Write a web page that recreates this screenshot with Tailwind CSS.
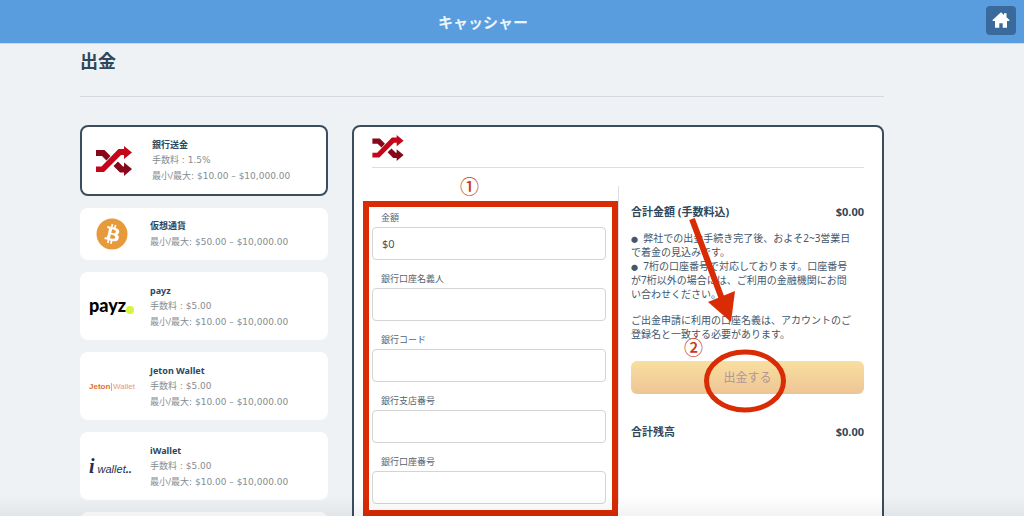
<!DOCTYPE html>
<html lang="ja">
<head>
<meta charset="utf-8">
<meta name="viewport" content="width=device-width, initial-scale=1">
<title>キャッシャー</title>
<script src="https://cdn.jsdelivr.net/npm/@tailwindcss/browser@4"></script>
</head>
<body class="h-screen overflow-hidden bg-[#eef2f5] font-['Noto_Sans','Noto_Sans_CJK_JP',sans-serif] text-[#2f4759]">
<svg class="hidden" aria-hidden="true">
  <symbol id="shuffle" viewBox="0 0 36 30">
    <path fill="#86081a" d="M0 4h8.500l6 6-4 4.500L6 10H0zM22 15.500l5 5h1v-4l8 6.500-8 7v-3.500h-4L17.500 20z"/>
    <path fill="#c4061a" d="M0 20.500h5.500L22.500 3H28V0l8 6.500-8 6.500V9h-3L8 26H0z"/>
  </symbol>
</svg>

<header class="flex h-[44px] items-center border-b border-[#c3dcf3] bg-[#5a9ddf]">
  <p class="flex-1 pr-15 text-center text-[15px] font-bold leading-5 text-[#eaf6fe]">キャッシャー</p>
  <a href="#" aria-label="ホーム" class="-ml-10 mb-[3px] mr-2 flex h-[29px] w-[30px] items-center justify-center rounded bg-[#3a6a9b]">
    <svg class="h-4 w-[18px]" viewBox="0 0 18 16" fill="#fff"><path d="M9 0.3 12 3V1.2h2.5v4L17.7 8.200 16.900 9H15v6.700h-4.300v-4.500H7.300v4.500H3V9H1.100L.3 8.200z"/></svg>
  </a>
</header>

<main class="pl-20 pr-[140px]">
  <h1 class="border-b border-[#d3d9de] pb-[21px] pt-[4px] text-[18px] font-bold leading-[27px]">出金</h1>

  <div class="mt-7 grid grid-cols-[248px_1fr] items-start gap-6">
    <ul class="flex flex-col gap-3 font-['DejaVu_Sans','Noto_Sans_CJK_JP',sans-serif] text-[9px] leading-4 text-[#858d93]">
      <li><a href="#" class="flex items-center gap-[15px] rounded-lg border-2 border-[#3b4e5f] bg-white py-[10px] pl-[9px]">
        <span class="flex w-[46px] justify-center"><svg class="h-[30px] w-9"><use href="#shuffle"/></svg></span>
        <span class="flex flex-col"><b class="font-['Noto_Sans','Noto_Sans_CJK_JP',sans-serif] leading-[15px] text-[#2c485e]">銀行送金</b><span>手数料 : 1.5%</span><span>最小/最大: $10.00 – $10,000.00</span></span>
      </a></li>
      <li><a href="#" class="flex items-center gap-[15px] rounded-lg bg-white py-[10px] pl-[9px]">
        <span class="flex w-[46px] justify-center">
          <svg class="h-8 w-8" viewBox="0 0 32 32"><circle cx="16" cy="16" r="15.500" fill="#e79a3c"/><path fill="#fff" d="M23.189 14.020c.314-2.096-1.283-3.223-3.465-3.975l.708-2.840-1.728-.430-.690 2.765-1.385-.326.695-2.783L15.596 6l-.708 2.839-1.104-.260.002-.009-2.384-.595-.460 1.846s1.283.294 1.256.312c.700.175.826.638.805 1.006l-.806 3.235.180.058-.183-.045-1.130 4.532c-.086.212-.303.531-.793.410.018.025-1.256-.313-1.256-.313l-.858 1.978 2.250.561 1.232.318-.715 2.872 1.727.430.708-2.840 1.380.357-.706 2.828 1.728.430.715-2.866c2.948.558 5.164.333 6.097-2.333.752-2.146-.037-3.385-1.588-4.192 1.130-.260 1.980-1.003 2.207-2.538zm-3.950 5.538c-.533 2.147-4.148.986-5.320.695l.950-3.805c1.172.293 4.929.872 4.370 3.110zm.535-5.569c-.487 1.953-3.495.960-4.470.717l.860-3.450c.975.243 4.118.696 3.610 2.733z"/></svg>
        </span>
        <span class="flex flex-col"><b class="font-['Noto_Sans','Noto_Sans_CJK_JP',sans-serif] text-[#2c485e]">仮想通貨</b><span>最小/最大: $50.00 – $10,000.00</span></span>
      </a></li>
      <li><a href="#" class="flex items-center gap-[15px] rounded-lg bg-white pb-[10px] pl-[9px] pt-[11px]">
        <span class="flex w-[46px] items-end pb-1"><span class="font-['Lato'] text-[18px] font-black leading-5 text-black">payz</span><i class="mb-px h-2 w-2 shrink-0 rounded-full bg-[#d3f53c]"></i></span>
        <span class="flex flex-col"><b class="font-['Noto_Sans','Noto_Sans_CJK_JP',sans-serif] leading-[15px] text-[#2c485e]">payz</b><span>手数料 : $5.00</span><span>最小/最大: $10.00 – $10,000.00</span></span>
      </a></li>
      <li><a href="#" class="flex items-center gap-[15px] rounded-lg bg-white pb-[10px] pl-[9px] pt-[11px]">
        <span class="flex w-[46px] items-center font-['Liberation_Sans'] text-[8px] leading-[10px] text-[#dd7031]"><b>Jeton</b><i class="mx-px h-2 w-px bg-[#dfa888]"></i><span class="text-[#e29a74]">Wallet</span></span>
        <span class="flex flex-col"><b class="font-['Noto_Sans','Noto_Sans_CJK_JP',sans-serif] leading-[15px] text-[#2c485e]">Jeton Wallet</b><span>手数料 : $5.00</span><span>最小/最大: $10.00 – $10,000.00</span></span>
      </a></li>
      <li><a href="#" class="flex items-center gap-[15px] rounded-lg bg-white pb-[10px] pl-[9px] pt-[11px]">
        <span class="flex w-[46px] items-baseline gap-[3px] italic text-[#233052]"><b class="font-['Liberation_Serif'] text-[20px] leading-5">i</b><span class="font-['Liberation_Sans'] text-[11px] leading-4">wallet<b>..</b></span></span>
        <span class="flex flex-col"><b class="font-['Noto_Sans','Noto_Sans_CJK_JP',sans-serif] leading-[15px] text-[#2c485e]">iWallet</b><span>手数料 : $5.00</span><span>最小/最大: $10.00 – $10,000.00</span></span>
      </a></li>
      <li><a href="#" aria-label="その他" class="block h-[68px] rounded-lg bg-white"></a></li>
    </ul>

    <section class="rounded-lg border-2 border-[#3b4e5f] bg-white px-[18px] pb-12 pt-[8px]">
      <div class="border-b border-[#dcdfe1] pb-[6px]"><svg class="h-[26px] w-8"><use href="#shuffle"/></svg></div>
      <form class="relative mt-[18px] grid grid-cols-2">
        <div class="flex flex-col pr-3 pt-[13px] text-[9px] text-[#526475]">
          <label for="amount" class="pb-[2px] pl-[9px] pt-[12px] leading-[14px]">金額</label>
          <input id="amount" value="$0" class="h-[33px] rounded border border-[#d2d4d6] px-[9px] text-[11px] text-[#43566a]">
          <label for="holder" class="pb-[2px] pl-[9px] pt-[12px] leading-[14px]">銀行口座名義人</label>
          <input id="holder" class="h-[33px] rounded border border-[#d2d4d6] px-[9px] text-[11px]">
          <label for="bank" class="pb-[2px] pl-[9px] pt-[12px] leading-[14px]">銀行コード</label>
          <input id="bank" class="h-[33px] rounded border border-[#d2d4d6] px-[9px] text-[11px]">
          <label for="branch" class="pb-[2px] pl-[9px] pt-[12px] leading-[14px]">銀行支店番号</label>
          <input id="branch" class="h-[33px] rounded border border-[#d2d4d6] px-[9px] text-[11px]">
          <label for="account" class="pb-[2px] pl-[9px] pt-[12px] leading-[14px]">銀行口座番号</label>
          <input id="account" class="h-[33px] rounded border border-[#d2d4d6] px-[9px] text-[11px]">
        </div>
        <div class="border-l border-[#dcdfe1] pl-3 pt-[18px]">
          <div class="flex justify-between text-[11px] font-bold leading-4"><span>合計金額 (手数料込)</span><span>$0.00</span></div>
          <p class="mt-[11px] whitespace-nowrap text-[10px] leading-[14px] text-[#43566a]"><span class="text-[7px] leading-none">●</span>&nbsp; 弊社での出金手続き完了後、およそ2~3営業日<br>で着金の見込みです。<br><span class="text-[7px] leading-none">●</span>&nbsp; 7桁の口座番号で対応しております。口座番号<br>が7桁以外の場合には、ご利用の金融機関にお問<br>い合わせください。</p>
          <p class="mt-3 whitespace-nowrap text-[10px] leading-[14px] text-[#43566a]">ご出金申請に利用の口座名義は、アカウントのご<br>登録名と一致する必要があります。</p>
          <button type="button" class="mt-[20px] block h-[33px] w-full rounded-md bg-linear-to-b from-[#f8dfa0] to-[#eec595] text-[12px] text-[#b29494]">出金する</button>
          <div class="mt-[30px] flex justify-between text-[11px] font-bold leading-4"><span>合計残高</span><span>$0.00</span></div>
        </div>

        <!-- Step annotations drawn over the form -->
        <div class="pointer-events-none absolute -left-[9px] right-1/2 top-[15px] h-[315px] border-6 border-[#d92b04]"></div>
        <span class="pointer-events-none absolute -top-[9px] left-[88px] text-[19px] font-medium leading-5 text-[#c93a1c]">①</span>
        <span class="pointer-events-none absolute left-[312px] top-[152px] text-[19px] font-medium leading-5 text-[#c93a1c]">②</span>
        <svg class="pointer-events-none absolute left-[246px] top-0 h-[240px] w-[246px]" viewBox="618 186 246 240" aria-hidden="true">
          <path d="M692 219 722 299" stroke="#d92b04" stroke-width="6" fill="none"/>
          <path d="M708 302 735 291 731 322z" fill="#d92b04"/>
          <ellipse cx="745" cy="381" rx="38.500" ry="29" stroke="#d92b04" stroke-width="5" fill="none"/>
        </svg>
      </form>
    </section>
  </div>
</main>
<div class="pointer-events-none fixed inset-x-0 bottom-0 h-5 bg-linear-to-b from-transparent to-black/5"></div>
</body>
</html>
